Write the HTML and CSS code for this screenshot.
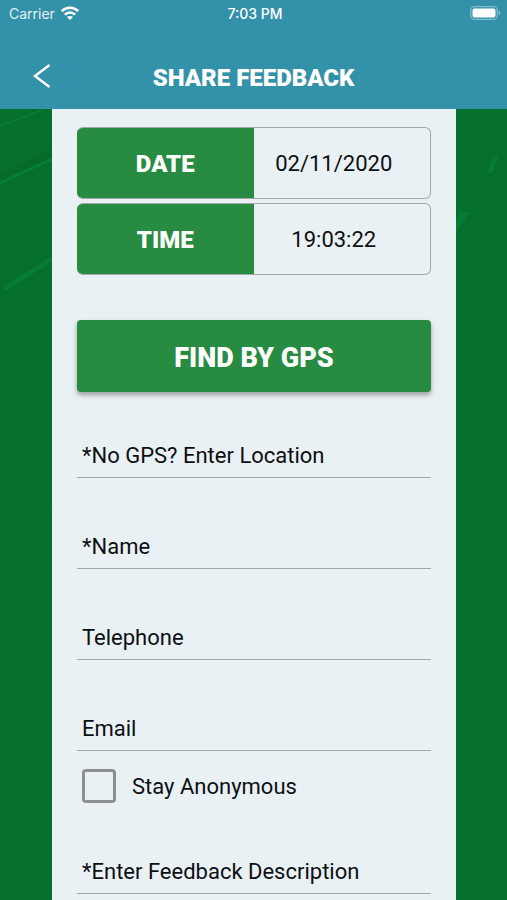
FILE: index.html
```
<!DOCTYPE html>
<html lang="en">
<head>
    <meta charset="UTF-8">
    <meta name="viewport" content="width=device-width, initial-scale=1.0">
    <title>Share Feedback</title>
    <link rel="stylesheet" href="styles.css">
</head>
<body>
    <header class="header">
        <div class="status-bar">
            <div class="carrier">
                <span>Carrier</span>
                <svg width="18" height="14" viewBox="0 0 18 14" fill="none" stroke="#fff" stroke-width="2.6" aria-hidden="true">
                    <path d="M0.8 5.2C5.4 0.6 12.6 0.6 17.2 5.2"/>
                    <path d="M3.8 8.6C6.8 5.7 11.2 5.7 14.2 8.6"/>
                    <path d="M9 14L6 11C7.7 9.5 10.3 9.5 12 11Z" fill="#fff" stroke="none"/>
                </svg>
            </div>
            <span class="clock">7:03 PM</span>
            <svg class="battery" width="31" height="14" viewBox="0 0 31 14" aria-hidden="true">
                <rect x="0.7" y="0.7" width="26.6" height="12.6" rx="3.6" fill="none" stroke="#fff" stroke-opacity="0.4" stroke-width="1.2"/>
                <rect x="2.5" y="2.5" width="23" height="9" rx="2" fill="#fff"/>
                <path d="M28.8 4.8C30.8 5.8 30.8 8.2 28.8 9.2Z" fill="#fff" fill-opacity="0.5"/>
            </svg>
        </div>
        <div class="title-bar">
            <button type="button" class="back" aria-label="Back">
                <svg width="18" height="24" viewBox="0 0 18 24" fill="none" stroke="#fff" stroke-width="2.4" aria-hidden="true">
                    <path d="M16.5 1L2 12L16.5 23"/>
                </svg>
            </button>
            <h1>SHARE FEEDBACK</h1>
        </div>
    </header>

    <main class="page">
        <svg class="streaks" width="507" height="600" viewBox="0 0 507 600" fill="none" stroke="#078538" aria-hidden="true">
            <path d="M0 17L42 1" stroke-width="2" opacity="0.6"/>
            <path d="M0 64L52 38V49L0 75Z" fill="#046326" stroke="none" opacity="0.4"/>
            <path d="M0 74L52 50" stroke-width="3" opacity="0.8"/>
            <path d="M4 180L52 150" stroke-width="5" opacity="0.6"/>
            <path d="M0 448L48 395" stroke-width="1" opacity="0.5"/>
            <path d="M487 64L492 50L499 46L492 64Z" fill="#078538" stroke="none" opacity="0.6"/>
            <path d="M456 124V110L460 103H469Z" fill="#078538" stroke="none" opacity="0.6"/>
        </svg>

        <form class="feedback-form">
            <div class="stamp">
                <label for="date">DATE</label>
                <input type="text" id="date" name="date" value="02/11/2020" readonly>
            </div>
            <div class="stamp">
                <label for="time">TIME</label>
                <input type="text" id="time" name="time" value="19:03:22" readonly>
            </div>

            <button type="button" class="gps-button">FIND BY GPS</button>

            <input class="field" type="text" name="location" placeholder="*No GPS? Enter Location" aria-label="Location">
            <input class="field" type="text" name="name" placeholder="*Name" aria-label="Name">
            <input class="field" type="tel" name="telephone" placeholder="Telephone" aria-label="Telephone">
            <input class="field" type="email" name="email" placeholder="Email" aria-label="Email">

            <div class="anonymous">
                <input type="checkbox" id="anonymous" name="anonymous">
                <label for="anonymous">Stay Anonymous</label>
            </div>

            <input class="field" type="text" name="description" placeholder="*Enter Feedback Description" aria-label="Feedback description">
        </form>
    </main>
</body>
</html>
```

FILE: styles.css
```
* {
    box-sizing: border-box;
}

body {
    margin: 0;
    min-height: 100vh;
    display: flex;
    flex-direction: column;
    font-family: Roboto, "Liberation Sans", sans-serif;
    font-size: 22px;
    color: #0d1012;
    background-color: #056f2e;
}

.header {
    height: 109px;
    background-color: #3391a9;
    color: #fff;
}

.status-bar {
    display: grid;
    grid-template-columns: 1fr auto 1fr;
    align-items: center;
    height: 26px;
    padding: 0 6px 0 9px;
    font-family: Inter, sans-serif;
    font-size: 14px;
}

.carrier {
    display: flex;
    align-items: center;
    gap: 6px;
    color: #e2f0f4;
}

.clock {
    font-weight: 500;
}

.battery {
    justify-self: end;
}

.title-bar {
    display: grid;
    grid-template-columns: 84px 1fr 84px;
    align-items: center;
    padding-top: 34px;
}

.back {
    display: flex;
    justify-content: center;
    padding: 0;
    border: none;
    background: none;
    cursor: pointer;
}

.title-bar h1 {
    margin: 0;
    padding-top: 4px;
    font-size: 24px;
    font-weight: 900;
    line-height: 28px;
    text-align: center;
}

.page {
    position: relative;
    flex: 1;
    display: flex;
    flex-direction: column;
    overflow: hidden;
}

/* light streaks behind the form */
.streaks {
    position: absolute;
    top: 0;
    left: 0;
}

.feedback-form {
    position: relative;
    flex: 1;
    display: flex;
    flex-direction: column;
    margin: 0 51px 0 52px;
    padding: 18px 25px 6px;
    background-color: #eaf1f4;
}

.stamp {
    display: grid;
    grid-template-columns: 1fr 1fr;
    height: 72px;
    margin-bottom: 4px;
    border: 1px solid #a3a7a9;
    border-left: none;
    border-radius: 6px;
    overflow: hidden;
}

.stamp label {
    display: flex;
    align-items: center;
    justify-content: center;
    padding-top: 2px;
    background-color: #278b41;
    color: #fff;
    font-size: 24px;
    font-weight: 900;
}

.stamp input {
    min-width: 0;
    padding: 0 16px 0 0;
    border: none;
    background: none;
    color: inherit;
    font: inherit;
    text-align: center;
}

.gps-button {
    height: 72px;
    margin-top: 41px;
    padding-top: 4px;
    border: none;
    border-radius: 4px;
    background-color: #278b41;
    box-shadow: 0 3px 5px rgba(0, 0, 0, 0.35);
    color: #fff;
    font-family: inherit;
    font-size: 27px;
    font-weight: 900;
    cursor: pointer;
}

.field {
    height: 44px;
    margin-top: 47px;
    padding: 0 5px;
    border: none;
    border-bottom: 1px solid #a3a7a9;
    border-radius: 0;
    background: none;
    color: inherit;
    font: inherit;
}

.gps-button + .field {
    margin-top: 42px;
}

.field::placeholder {
    color: #0d1012;
    opacity: 1;
}

.anonymous {
    display: flex;
    align-items: center;
    gap: 16px;
    margin-top: 18px;
    padding-left: 5px;
}

.anonymous input {
    appearance: none;
    width: 34px;
    height: 34px;
    margin: 0;
    border: 3px solid #8d9092;
    border-radius: 4px;
}

.anonymous input:checked {
    background-color: #278b41;
}
```
